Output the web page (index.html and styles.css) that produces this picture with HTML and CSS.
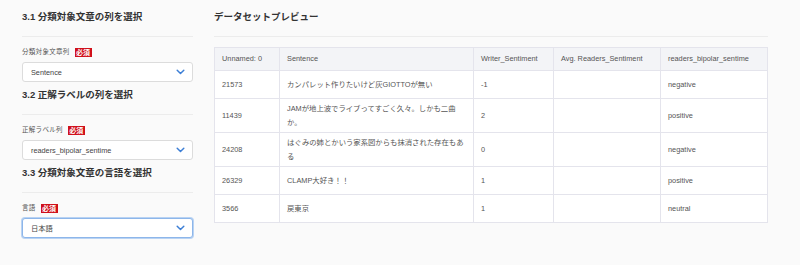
FILE: index.html
```html
<!DOCTYPE html>
<html>
<head>
  <title>データセット設定</title>
  <link rel="stylesheet" href="styles.css">
</head>
<body>
  <div class="layout">
    <div class="settings">
      <h3 class="section-title">3.1 分類対象文章の列を選択</h3>
      <div class="field">
        <div class="field-label">分類対象文章列 <span class="required">必須</span></div>
        <div class="select">
          <span>Sentence</span>
          <svg class="chevron" width="9" height="6" viewBox="0 0 9 6"><path d="M1.2 1.3 L4.5 4.5 L7.8 1.3" fill="none" stroke="#3d7fd6" stroke-width="1.5" stroke-linecap="round" stroke-linejoin="round"/></svg>
        </div>
      </div>

      <h3 class="section-title">3.2 正解ラベルの列を選択</h3>
      <div class="field">
        <div class="field-label">正解ラベル列 <span class="required">必須</span></div>
        <div class="select">
          <span>readers_bipolar_sentime</span>
          <svg class="chevron" width="9" height="6" viewBox="0 0 9 6"><path d="M1.2 1.3 L4.5 4.5 L7.8 1.3" fill="none" stroke="#3d7fd6" stroke-width="1.5" stroke-linecap="round" stroke-linejoin="round"/></svg>
        </div>
      </div>

      <h3 class="section-title">3.3 分類対象文章の言語を選択</h3>
      <div class="field">
        <div class="field-label">言語 <span class="required">必須</span></div>
        <div class="select focused">
          <span>日本語</span>
          <svg class="chevron" width="9" height="6" viewBox="0 0 9 6"><path d="M1.2 1.3 L4.5 4.5 L7.8 1.3" fill="none" stroke="#3d7fd6" stroke-width="1.5" stroke-linecap="round" stroke-linejoin="round"/></svg>
        </div>
      </div>
    </div>

    <div class="preview">
      <h3 class="section-title">データセットプレビュー</h3>
      <table class="preview-table">
        <colgroup>
          <col style="width: 65px">
          <col style="width: 194px">
          <col style="width: 80px">
          <col style="width: 107px">
          <col style="width: 107px">
        </colgroup>
        <thead>
          <tr>
            <th>Unnamed: 0</th>
            <th>Sentence</th>
            <th>Writer_Sentiment</th>
            <th>Avg. Readers_Sentiment</th>
            <th>readers_bipolar_sentime</th>
          </tr>
        </thead>
        <tbody>
          <tr>
            <td>21573</td>
            <td>カンパレット作りたいけど灰GIOTTOが無い</td>
            <td>-1</td>
            <td></td>
            <td>negative</td>
          </tr>
          <tr>
            <td>11439</td>
            <td>JAMが地上波でライブってすごく久々。しかも二曲か。</td>
            <td>2</td>
            <td></td>
            <td>positive</td>
          </tr>
          <tr>
            <td>24208</td>
            <td>はぐみの姉とかいう家系図からも抹消された存在もあ<br>る</td>
            <td>0</td>
            <td></td>
            <td>negative</td>
          </tr>
          <tr>
            <td>26329</td>
            <td>CLAMP大好き！！</td>
            <td>1</td>
            <td></td>
            <td>positive</td>
          </tr>
          <tr>
            <td>3566</td>
            <td>戻東京</td>
            <td>1</td>
            <td></td>
            <td>neutral</td>
          </tr>
        </tbody>
      </table>
    </div>
  </div>
</body>
</html>
```

FILE: styles.css
```css
body {
  margin: 0;
  background: #fafafa;
  font-family: "Liberation Sans", "Noto Sans CJK JP", sans-serif;
  color: #333;
}

.layout {
  display: flex;
  gap: 21px;
  padding: 10px 33px 0 22px;
}

.settings {
  width: 171px;
  flex-shrink: 0;
}

.preview {
  flex: 1;
}

/* Section headings with a faint rule under them */
.section-title {
  margin: 0;
  font-size: 9.5px;
  line-height: 14px;
  font-weight: bold;
  color: #333;
  padding-bottom: 12px;
  border-bottom: 1px solid #ececec;
}

.field {
  padding-top: 10px;
  margin-bottom: 6px;
}

.field-label {
  display: flex;
  align-items: center;
  gap: 5px;
  font-size: 6.5px;
  line-height: 10px;
  color: #555;
  letter-spacing: 0.3px;
  margin-bottom: 5px;
}

.required {
  background: #d0101b;
  color: white;
  font-weight: bold;
  font-size: 7px;
  line-height: 9px;
  padding: 0 1.5px;
  letter-spacing: 0;
}

.select {
  display: flex;
  align-items: center;
  justify-content: space-between;
  box-sizing: border-box;
  height: 20px;
  padding: 0 7px 0 8px;
  background: white;
  border: 1px solid #dcdcdc;
  border-radius: 3px;
  font-size: 7.3px;
  color: #444;
}

.select.focused {
  border-color: #8db6ea;
  box-shadow: 0 0 0 1px #b9d3f3;
}

.chevron {
  display: block;
}

.preview .section-title {
  margin-bottom: 10px;
}

.preview-table {
  width: 553px;
  table-layout: fixed;
  border-collapse: collapse;
  background: white;
  font-size: 7.35px;
  color: #555;
}

.preview-table th,
.preview-table td {
  border: 1px solid #e4e4ec;
  padding: 2.5px 7px;
  line-height: 14px;
  text-align: left;
  vertical-align: middle;
}

.preview-table th {
  height: 17px;
  font-weight: normal;
  background: #f3f4f7;
  color: #555;
}

.preview-table td {
  height: 22px;
}
```
